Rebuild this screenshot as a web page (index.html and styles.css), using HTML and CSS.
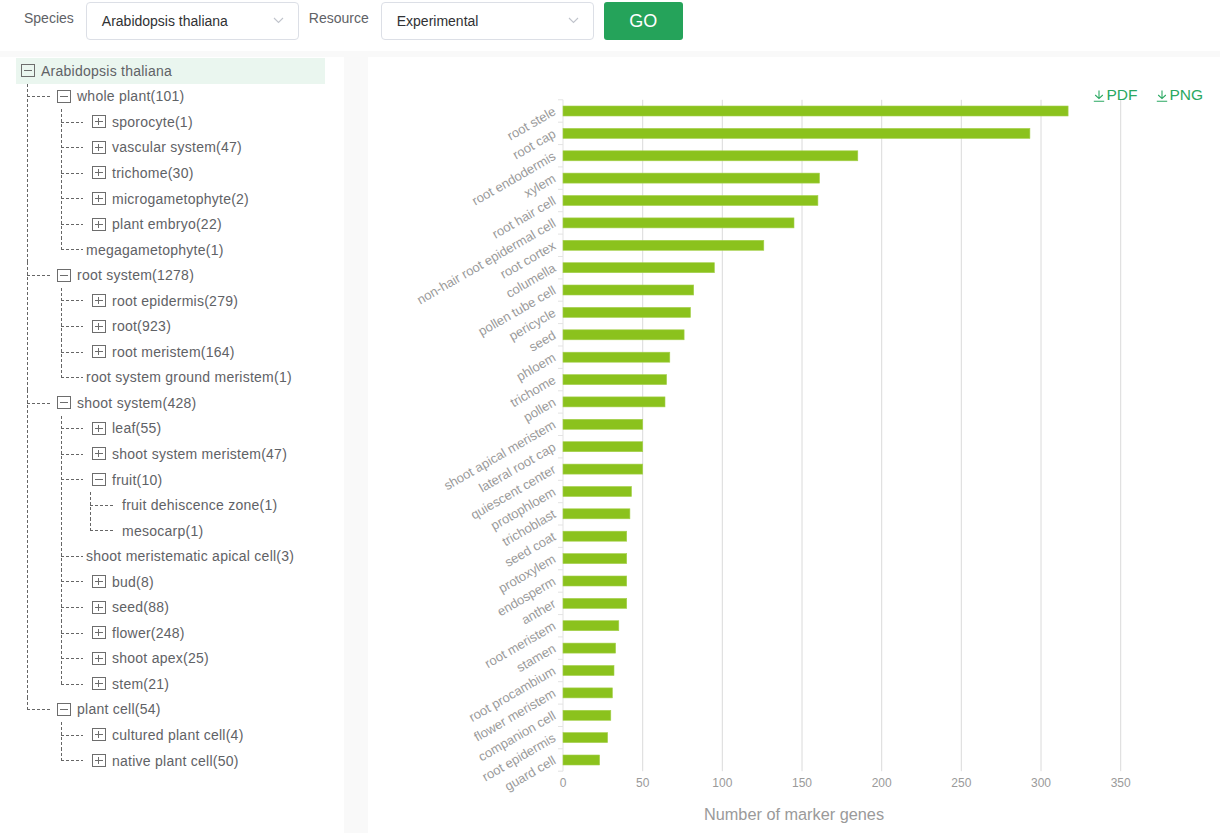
FILE: index.html
```html
<!DOCTYPE html>
<html lang="en">
<head>
<meta charset="utf-8">
<title>Marker genes</title>
<link rel="stylesheet" href="styles.css">
</head>
<body>
<header class="toolbar">
  <label class="field-label">Species</label>
  <div class="select sel-species"><span>Arabidopsis thaliana</span><svg class="chev" width="11" height="7" viewBox="0 0 11 7"><path d="M1 1l4.5 4.5L10 1" fill="none" stroke="#c0c4cc" stroke-width="1.1"/></svg></div>
  <label class="field-label">Resource</label>
  <div class="select sel-resource"><span>Experimental</span><svg class="chev" width="11" height="7" viewBox="0 0 11 7"><path d="M1 1l4.5 4.5L10 1" fill="none" stroke="#c0c4cc" stroke-width="1.1"/></svg></div>
  <button class="go">GO</button>
</header>

<main class="main">
  <aside class="tree-panel">
    <ul class="tree">
      <li class="root">
        <div class="row selected"><span class="box minus"></span><span class="lbl">Arabidopsis thaliana</span></div>
        <ul class="children l1">
          <li class="item">
            <div class="row"><span class="box minus"></span><span class="lbl">whole plant(101)</span></div>
            <ul class="children l2">
              <li class="item"><div class="row"><span class="box plus"></span><span class="lbl">sporocyte(1)</span></div></li>
              <li class="item"><div class="row"><span class="box plus"></span><span class="lbl">vascular system(47)</span></div></li>
              <li class="item"><div class="row"><span class="box plus"></span><span class="lbl">trichome(30)</span></div></li>
              <li class="item"><div class="row"><span class="box plus"></span><span class="lbl">microgametophyte(2)</span></div></li>
              <li class="item"><div class="row"><span class="box plus"></span><span class="lbl">plant embryo(22)</span></div></li>
              <li class="item"><div class="row leaf"><span class="lbl">megagametophyte(1)</span></div></li>
            </ul>
          </li>
          <li class="item">
            <div class="row"><span class="box minus"></span><span class="lbl">root system(1278)</span></div>
            <ul class="children l2">
              <li class="item"><div class="row"><span class="box plus"></span><span class="lbl">root epidermis(279)</span></div></li>
              <li class="item"><div class="row"><span class="box plus"></span><span class="lbl">root(923)</span></div></li>
              <li class="item"><div class="row"><span class="box plus"></span><span class="lbl">root meristem(164)</span></div></li>
              <li class="item"><div class="row leaf"><span class="lbl">root system ground meristem(1)</span></div></li>
            </ul>
          </li>
          <li class="item">
            <div class="row"><span class="box minus"></span><span class="lbl">shoot system(428)</span></div>
            <ul class="children l2">
              <li class="item"><div class="row"><span class="box plus"></span><span class="lbl">leaf(55)</span></div></li>
              <li class="item"><div class="row"><span class="box plus"></span><span class="lbl">shoot system meristem(47)</span></div></li>
              <li class="item">
                <div class="row"><span class="box minus"></span><span class="lbl">fruit(10)</span></div>
                <ul class="children l3">
                  <li class="item"><div class="row leaf"><span class="lbl">fruit dehiscence zone(1)</span></div></li>
                  <li class="item"><div class="row leaf"><span class="lbl">mesocarp(1)</span></div></li>
                </ul>
              </li>
              <li class="item"><div class="row leaf"><span class="lbl">shoot meristematic apical cell(3)</span></div></li>
              <li class="item"><div class="row"><span class="box plus"></span><span class="lbl">bud(8)</span></div></li>
              <li class="item"><div class="row"><span class="box plus"></span><span class="lbl">seed(88)</span></div></li>
              <li class="item"><div class="row"><span class="box plus"></span><span class="lbl">flower(248)</span></div></li>
              <li class="item"><div class="row"><span class="box plus"></span><span class="lbl">shoot apex(25)</span></div></li>
              <li class="item"><div class="row"><span class="box plus"></span><span class="lbl">stem(21)</span></div></li>
            </ul>
          </li>
          <li class="item">
            <div class="row"><span class="box minus"></span><span class="lbl">plant cell(54)</span></div>
            <ul class="children l2">
              <li class="item"><div class="row"><span class="box plus"></span><span class="lbl">cultured plant cell(4)</span></div></li>
              <li class="item"><div class="row"><span class="box plus"></span><span class="lbl">native plant cell(50)</span></div></li>
            </ul>
          </li>
        </ul>
      </li>
    </ul>
  </aside>

  <section class="chart-panel">
    <div class="export">
      <a class="exp"><svg width="12" height="12" viewBox="0 0 12 12"><path d="M6 0.5v8M2.2 5l3.8 3.6L9.8 5M0.8 11.3h10.4" fill="none" stroke="currentColor" stroke-width="1.1"/></svg>PDF</a>
      <a class="exp"><svg width="12" height="12" viewBox="0 0 12 12"><path d="M6 0.5v8M2.2 5l3.8 3.6L9.8 5M0.8 11.3h10.4" fill="none" stroke="currentColor" stroke-width="1.1"/></svg>PNG</a>
    </div>
    <svg class="chart" width="852" height="776" viewBox="368 57 852 776">
      <g class="grid">
        <line x1="642.7" y1="99.8" x2="642.7" y2="771.2"/>
        <line x1="722.3" y1="99.8" x2="722.3" y2="771.2"/>
        <line x1="802" y1="99.8" x2="802" y2="771.2"/>
        <line x1="881.7" y1="99.8" x2="881.7" y2="771.2"/>
        <line x1="961.3" y1="99.8" x2="961.3" y2="771.2"/>
        <line x1="1041" y1="99.8" x2="1041" y2="771.2"/>
        <line x1="1120.7" y1="99.8" x2="1120.7" y2="771.2"/>
      </g>
      <g class="axis">
        <line x1="563" y1="99.8" x2="563" y2="771.2"/>
        <path d="M558 99.8h5M558 122.2h5M558 144.6h5M558 166.9h5M558 189.3h5M558 211.7h5M558 234.1h5M558 256.5h5M558 278.9h5M558 301.2h5M558 323.6h5M558 346h5M558 368.4h5M558 390.8h5M558 413.1h5M558 435.5h5M558 457.9h5M558 480.3h5M558 502.7h5M558 525h5M558 547.4h5M558 569.8h5M558 592.2h5M558 614.6h5M558 636.9h5M558 659.3h5M558 681.7h5M558 704.1h5M558 726.5h5M558 748.8h5M558 771.2h5"/>
      </g>
      <g class="bars">
        <rect x="563" y="106" width="505.1" height="10"/>
        <rect x="563" y="128.4" width="466.9" height="10"/>
        <rect x="563" y="150.8" width="294.8" height="10"/>
        <rect x="563" y="173.1" width="256.5" height="10"/>
        <rect x="563" y="195.5" width="254.9" height="10"/>
        <rect x="563" y="217.9" width="231" height="10"/>
        <rect x="563" y="240.3" width="200.8" height="10"/>
        <rect x="563" y="262.7" width="151.4" height="10"/>
        <rect x="563" y="285" width="130.7" height="10"/>
        <rect x="563" y="307.4" width="127.5" height="10"/>
        <rect x="563" y="329.8" width="121.1" height="10"/>
        <rect x="563" y="352.2" width="106.8" height="10"/>
        <rect x="563" y="374.6" width="103.6" height="10"/>
        <rect x="563" y="396.9" width="102" height="10"/>
        <rect x="563" y="419.3" width="79.7" height="10"/>
        <rect x="563" y="441.7" width="79.7" height="10"/>
        <rect x="563" y="464.1" width="79.7" height="10"/>
        <rect x="563" y="486.5" width="68.5" height="10"/>
        <rect x="563" y="508.8" width="66.9" height="10"/>
        <rect x="563" y="531.2" width="63.7" height="10"/>
        <rect x="563" y="553.6" width="63.7" height="10"/>
        <rect x="563" y="576" width="63.7" height="10"/>
        <rect x="563" y="598.4" width="63.7" height="10"/>
        <rect x="563" y="620.7" width="55.8" height="10"/>
        <rect x="563" y="643.1" width="52.6" height="10"/>
        <rect x="563" y="665.5" width="51" height="10"/>
        <rect x="563" y="687.9" width="49.4" height="10"/>
        <rect x="563" y="710.3" width="47.8" height="10"/>
        <rect x="563" y="732.6" width="44.6" height="10"/>
        <rect x="563" y="755" width="36.6" height="10"/>
      </g>
      <g class="cat">
        <text x="555" y="111" transform="rotate(-30 555 111)">root stele</text>
        <text x="555" y="133.4" transform="rotate(-30 555 133.4)">root cap</text>
        <text x="555" y="155.8" transform="rotate(-30 555 155.8)">root endodermis</text>
        <text x="555" y="178.1" transform="rotate(-30 555 178.1)">xylem</text>
        <text x="555" y="200.5" transform="rotate(-30 555 200.5)">root hair cell</text>
        <text x="555" y="222.9" transform="rotate(-30 555 222.9)">non-hair root epidermal cell</text>
        <text x="555" y="245.3" transform="rotate(-30 555 245.3)">root cortex</text>
        <text x="555" y="267.7" transform="rotate(-30 555 267.7)">columella</text>
        <text x="555" y="290" transform="rotate(-30 555 290)">pollen tube cell</text>
        <text x="555" y="312.4" transform="rotate(-30 555 312.4)">pericycle</text>
        <text x="555" y="334.8" transform="rotate(-30 555 334.8)">seed</text>
        <text x="555" y="357.2" transform="rotate(-30 555 357.2)">phloem</text>
        <text x="555" y="379.6" transform="rotate(-30 555 379.6)">trichome</text>
        <text x="555" y="401.9" transform="rotate(-30 555 401.9)">pollen</text>
        <text x="555" y="424.3" transform="rotate(-30 555 424.3)">shoot apical meristem</text>
        <text x="555" y="446.7" transform="rotate(-30 555 446.7)">lateral root cap</text>
        <text x="555" y="469.1" transform="rotate(-30 555 469.1)">quiescent center</text>
        <text x="555" y="491.5" transform="rotate(-30 555 491.5)">protophloem</text>
        <text x="555" y="513.8" transform="rotate(-30 555 513.8)">trichoblast</text>
        <text x="555" y="536.2" transform="rotate(-30 555 536.2)">seed coat</text>
        <text x="555" y="558.6" transform="rotate(-30 555 558.6)">protoxylem</text>
        <text x="555" y="581" transform="rotate(-30 555 581)">endosperm</text>
        <text x="555" y="603.4" transform="rotate(-30 555 603.4)">anther</text>
        <text x="555" y="625.7" transform="rotate(-30 555 625.7)">root meristem</text>
        <text x="555" y="648.1" transform="rotate(-30 555 648.1)">stamen</text>
        <text x="555" y="670.5" transform="rotate(-30 555 670.5)">root procambium</text>
        <text x="555" y="692.9" transform="rotate(-30 555 692.9)">flower meristem</text>
        <text x="555" y="715.3" transform="rotate(-30 555 715.3)">companion cell</text>
        <text x="555" y="737.6" transform="rotate(-30 555 737.6)">root epidermis</text>
        <text x="555" y="760" transform="rotate(-30 555 760)">guard cell</text>
      </g>
      <g class="xlab">
        <text x="563" y="784">0</text>
        <text x="642.7" y="784">50</text>
        <text x="722.3" y="784">100</text>
        <text x="802" y="784">150</text>
        <text x="881.7" y="784">200</text>
        <text x="961.3" y="784">250</text>
        <text x="1041" y="784">300</text>
        <text x="1120.7" y="784">350</text>
      </g>
      <text class="xtitle" x="794" y="815.5">Number of marker genes</text>
    </svg>
  </section>
</main>
</body>
</html>
```
FILE: styles.css
```css
* { box-sizing: border-box; }
html, body { margin: 0; padding: 0; }
body {
  width: 1220px;
  height: 833px;
  overflow: hidden;
  background: #f9f9f9;
  font-family: "Liberation Sans", Arial, sans-serif;
  color: #606266;
}

/* ---------- top toolbar ---------- */
.toolbar {
  height: 51px;
  background: #fff;
  display: flex;
  align-items: flex-start;
  padding: 2px 0 0 24px;
}
.field-label {
  font-size: 14px;
  line-height: 17px;
  margin-top: 8px;
  margin-right: 12px;
  color: #606266;
}
.select {
  height: 38px;
  border: 1px solid #dcdfe6;
  border-radius: 4px;
  background: #fff;
  display: flex;
  align-items: center;
  justify-content: space-between;
  padding: 0 14px 0 15px;
  font-size: 14px;
  color: #303133;
  margin-right: 10px;
}
.sel-species { width: 213px; }
.sel-resource { width: 213px; }
.chev { display: block; margin-top: -1px; }
.go {
  width: 79px;
  height: 38px;
  border: none;
  border-radius: 3px;
  background: #25a35a;
  color: #fff;
  font-family: "Liberation Sans", Arial, sans-serif;
  font-size: 18px;
  padding: 0;
}

/* ---------- main area ---------- */
.main {
  display: flex;
  gap: 24px;
  margin-top: 6px;
  height: 776px;
}
.tree-panel {
  width: 344px;
  background: #fff;
  padding: 1px 0 0 16px;
}
.chart-panel {
  flex: 1;
  background: #fff;
  position: relative;
}

/* ---------- tree ---------- */
.tree, .tree ul {
  list-style: none;
  margin: 0;
  padding: 0;
}
.row {
  display: flex;
  align-items: center;
  height: 25.55px;
  font-size: 14px;
  letter-spacing: 0.25px;
  color: #5f6266;
  white-space: nowrap;
}
.row.selected {
  width: 309px;
  background: #eaf6ef;
  padding-left: 5px;
}
.box {
  position: relative;
  width: 14px;
  height: 13px;
  border: 1px solid #6d6d6d;
  margin-right: 6px;
  flex: none;
}
.box::before {
  content: "";
  position: absolute;
  left: 2px;
  right: 2px;
  top: 5px;
  height: 1px;
  background: #6d6d6d;
}
.box.plus::after {
  content: "";
  position: absolute;
  top: 2px;
  bottom: 2px;
  left: 5px;
  width: 1px;
  background: #6d6d6d;
}

.children { position: relative; }
.children.l1 { margin-left: 11px; }
.children.l2 { margin-left: 34px; }
.children.l3 { margin-left: 29px; }

.item { position: relative; }
.item::before {
  content: "";
  position: absolute;
  left: 0;
  top: 12.5px;
  height: 1px;
  background: repeating-linear-gradient(to right, #666 0 3px, transparent 3px 5px);
}
.item::after {
  content: "";
  position: absolute;
  left: 0;
  top: 0;
  bottom: 0;
  width: 1px;
  background: repeating-linear-gradient(to bottom, #666 0 3px, transparent 3px 5px);
}
.item:last-child::after { bottom: auto; height: 13px; }

.l1 > .item::before { width: 25px; }
.l2 > .item::before { width: 22px; }
.l3 > .item::before { width: 23px; }

.l1 > .item > .row { padding-left: 30px; }
.l2 > .item > .row { padding-left: 31px; }
.l2 > .item > .row.leaf { padding-left: 25px; }
.l3 > .item > .row.leaf { padding-left: 32px; }

/* ---------- chart ---------- */
.export {
  position: absolute;
  top: 29px;
  right: 17px;
  display: flex;
  gap: 19px;
  font-size: 15.5px;
  color: #2aa862;
}
.exp {
  display: flex;
  align-items: center;
  gap: 1px;
  line-height: 18px;
}
.exp svg { display: block; margin-top: 2px; }

.chart { display: block; font-family: "Liberation Sans", Arial, sans-serif; }
.grid line { stroke: #dadada; stroke-width: 1; }
.axis line, .axis path { stroke: #e3e3e3; stroke-width: 1; fill: none; }
.bars rect { fill: #8bc21d; stroke: #a6d04e; stroke-width: 0.6; }
.cat text {
  font-size: 13px;
  fill: #9a9a9a;
  text-anchor: end;
  dominant-baseline: middle;
}
.xlab text {
  font-size: 12px;
  fill: #9a9a9a;
  text-anchor: middle;
  dominant-baseline: middle;
}
.xtitle {
  font-size: 16.3px;
  fill: #9a9a9a;
  text-anchor: middle;
  dominant-baseline: middle;
}
```
